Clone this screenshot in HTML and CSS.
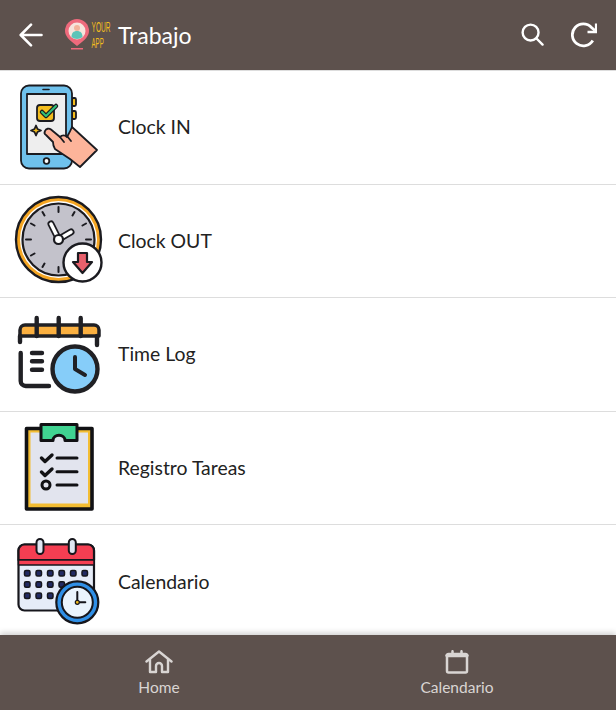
FILE: index.html
```html
<!DOCTYPE html>
<html lang="es">
<head>
    <meta charset="UTF-8">
    <meta name="viewport" content="width=device-width, initial-scale=1.0">
    <title>Trabajo</title>
    <link rel="stylesheet" href="styles.css">
</head>
<body>

    <!-- Barra superior -->
    <header class="topbar">
        <svg class="back" width="24" height="24" viewBox="0 0 24 24" fill="none" stroke="#fff" stroke-width="2.6" stroke-linecap="round" stroke-linejoin="round">
            <path d="M22.500 12H2M12 1.700L1.700 12 12 22.300"/>
        </svg>
        <svg class="logo" width="48" height="32" viewBox="0 0 48 32">
            <path d="M13 27C5 21 1 17 1 12a12 12 0 0 1 24 0c0 5-4 9-12 15z" fill="#ee6a7c"/>
            <circle cx="13" cy="12" r="8.500" fill="#f6e4dc"/>
            <path d="M7.500 18c0-4 2-6 5.500-6s5.500 2 5.500 6c-3 2.500-8 2.500-11 0z" fill="#5cc4b8"/>
            <circle cx="13" cy="9" r="3" fill="#f2b49c"/>
            <rect x="7" y="29" width="12" height="1.500" fill="#ee6a7c"/>
            <text class="logo-text" transform="translate(27.500 12.500) scale(.47 1)">YOUR</text>
            <text class="logo-text" transform="translate(27.500 29) scale(.44 1)">APP</text>
        </svg>
        <h1 class="title">Trabajo</h1>
        <div class="actions">
            <svg width="23" height="23" viewBox="0 0 24 24" fill="none" stroke="#fff" stroke-width="2.500" stroke-linecap="round">
                <circle cx="10" cy="10" r="8.300"/>
                <path d="M16.200 16.200L22.500 22.500"/>
            </svg>
            <svg width="26" height="26" viewBox="0 0 26 26" fill="none" stroke="#fff" stroke-width="2.800">
                <path d="M21.800 18.500A11 11 0 1 1 20.500 5.500L24 8.500"/>
                <path d="M25.200 1.500V10H16.500" stroke-width="2.600"/>
            </svg>
        </div>
    </header>

    <!-- Lista de opciones -->
    <main class="menu">
        <a class="item">
            <svg class="item-icon" viewBox="0 0 90 90" stroke="#1b1b20" stroke-width="1.800" stroke-linejoin="round" stroke-linecap="round">
                <rect x="58" y="16" width="4" height="8" rx="1.500" fill="#f3bd1e"/>
                <rect x="58" y="29" width="4" height="8" rx="1.500" fill="#f3bd1e"/>
                <rect x="7" y="3.500" width="51" height="83" rx="8" fill="#6fc1ec"/>
                <rect x="13" y="12" width="39" height="60" fill="#eeeeee"/>
                <path d="M29 7.500h6" stroke-width="1.600"/>
                <circle cx="32.500" cy="79" r="2.800" fill="#fff"/>
                <rect x="23" y="23" width="17" height="16" rx="3" fill="#f3bd1e"/>
                <path d="M28 30l4 4 10-10" fill="none" stroke-width="4.500"/>
                <path d="M28 30l4 4 10-10" fill="none" stroke="#2fc27a" stroke-width="2"/>
                <path d="M22 43.500l1.500 3.500 3.500 1.500-3.500 1.500-1.500 3.500-1.500-3.500-3.500-1.500 3.500-1.500z" fill="#f3bd1e"/>
                <path d="M31 49c1-2.500 4-3 6-1.500l9 7.500c2-2 5-2 7 0 1-2 3-5 5-10l25 23-17 17-10-8-15-10c-2-3-2-5-2-7l-7-7c-2-1-2-2-1-4z" fill="#fdb49a"/>
                <path d="M46 55l4 5M53 54l4 5" fill="none"/>
            </svg>
            <span>Clock IN</span>
        </a>
        <a class="item">
            <svg class="item-icon" viewBox="0 0 90 90" stroke="#1b1b20" stroke-linecap="round" stroke-linejoin="round">
                <circle cx="44.500" cy="44.500" r="42.500" fill="#f5a623" stroke-width="2.400"/>
                <circle cx="44.500" cy="44.500" r="38.500" fill="#fff" stroke="none"/>
                <circle cx="44.500" cy="44.500" r="36" fill="#c3c2cb" stroke-width="2.200"/>
                <path d="M44.500 12v5M44.500 72v5M12 44.500h5M72 44.500h5M28.500 17l2 3.500M60.500 17l-2 3.500M17 28.500l3.500 2M72 28.500l-3.500 2M17 60.500l3.500-2M28.500 72l2-3.500" fill="none" stroke-width="2"/>
                <path d="M37 29l7.500 15" fill="none" stroke-width="7"/>
                <path d="M37 29l7.500 15" fill="none" stroke="#fff" stroke-width="3.500"/>
                <path d="M57 37l-12 7" fill="none" stroke-width="7"/>
                <path d="M57 37l-12 7" fill="none" stroke="#fff" stroke-width="3.500"/>
                <circle cx="44.500" cy="44.500" r="4.500" fill="#fff" stroke-width="2.200"/>
                <circle cx="68.500" cy="67.500" r="19" fill="#fff" stroke-width="2.400"/>
                <path d="M64 58h9v9h5l-9.500 11L59 67h5z" fill="#e8606c" stroke-width="2.200"/>
            </svg>
            <span>Clock OUT</span>
        </a>
        <a class="item">
            <svg class="item-icon" viewBox="0 0 90 90" fill="none" stroke="#202024" stroke-width="4.400" stroke-linecap="round" stroke-linejoin="round">
                <path d="M6 27V21a5 5 0 0 1 5-5h69a5 5 0 0 1 5 5v6z" fill="#fbb040" stroke-width="3.500"/>
                <path d="M22.700 9v18M44.700 9v18M66.700 9v18"/>
                <path d="M6 27v6M83 27v9"/>
                <path d="M6.700 44v28a5 5 0 0 0 5 5H35"/>
                <path d="M18 44h10M18 52.300h10M18 60.700h10"/>
                <circle cx="61" cy="60" r="22.500" fill="#86cdf9"/>
                <path d="M61 48v12l10 6" stroke-width="4"/>
            </svg>
            <span>Time Log</span>
        </a>
        <a class="item">
            <svg class="item-icon" viewBox="0 0 90 90" stroke="#111114" stroke-linecap="round" stroke-linejoin="round">
                <rect x="12.500" y="6.500" width="65.500" height="80.500" fill="#f3bd33" stroke-width="3.600"/>
                <rect x="16.500" y="10.500" width="57.500" height="71" fill="#e2e4ee" stroke="none"/>
                <path d="M27 2.500h36v16H51c0-7-12-7-12 0H27z" fill="#40d391" stroke-width="3"/>
                <path d="M27.500 36l3.500 3.500 7-6.500M27.500 50l3.500 3.500 7-6.500" fill="none" stroke-width="3.400"/>
                <circle cx="32" cy="63" r="4" fill="#e2e4ee" stroke-width="3"/>
                <path d="M43 36h20M43 49.700h20M43 63h20" fill="none" stroke-width="3"/>
            </svg>
            <span>Registro Tareas</span>
        </a>
        <a class="item last">
            <svg class="item-icon" viewBox="0 0 90 90" stroke="#16161c" stroke-linecap="round" stroke-linejoin="round">
                <rect x="4.500" y="8.500" width="75.500" height="66" rx="6" fill="#e6ecf8" stroke-width="2.200"/>
                <path d="M4.500 24v-9.500a6 6 0 0 1 6-6H74a6 6 0 0 1 6 6V24z" fill="#f53e52" stroke-width="2.200"/>
                <rect x="4.500" y="24" width="75.500" height="5" fill="#f53e52" stroke-width="1.500"/>
                <rect x="22.500" y="3" width="7" height="15" rx="3.500" fill="#dfe6f2" stroke-width="2"/>
                <rect x="54.800" y="3" width="7" height="15" rx="3.500" fill="#dfe6f2" stroke-width="2"/>
                <g fill="#222a63" stroke-width="1.500">
                    <rect x="10.500" y="34.500" width="5.500" height="5.500" rx="1.500"/>
                    <rect x="22" y="34.500" width="5.500" height="5.500" rx="1.500"/>
                    <rect x="33.500" y="34.500" width="5.500" height="5.500" rx="1.500"/>
                    <rect x="45" y="34.500" width="5.500" height="5.500" rx="1.500"/>
                    <rect x="56.500" y="34.500" width="5.500" height="5.500" rx="1.500"/>
                    <rect x="68" y="34.500" width="5.500" height="5.500" rx="1.500"/>
                    <rect x="10.500" y="45.800" width="5.500" height="5.500" rx="1.500"/>
                    <rect x="22" y="45.800" width="5.500" height="5.500" rx="1.500"/>
                    <rect x="33.500" y="45.800" width="5.500" height="5.500" rx="1.500"/>
                    <rect x="45" y="45.800" width="5.500" height="5.500" rx="1.500"/>
                    <rect x="10.500" y="57" width="5.500" height="5.500" rx="1.500"/>
                    <rect x="22" y="57" width="5.500" height="5.500" rx="1.500"/>
                    <rect x="33.500" y="57" width="5.500" height="5.500" rx="1.500"/>
                </g>
                <circle cx="63.300" cy="66.300" r="21" fill="#2f8fe6" stroke-width="2.200"/>
                <circle cx="63.300" cy="66.300" r="15.500" fill="#eaf4fd" stroke-width="2"/>
                <path d="M63.300 56v10.300h8" fill="none" stroke-width="2"/>
                <circle cx="63.300" cy="66.300" r="2" fill="#f3bd1e" stroke-width="1.200"/>
            </svg>
            <span>Calendario</span>
        </a>
    </main>

    <!-- Navegacion inferior -->
    <nav class="tabs">
        <a class="tab">
            <svg width="28" height="24" viewBox="0 0 28 24" fill="none" stroke="#d9d5d3" stroke-width="2.400" stroke-linejoin="round" stroke-linecap="round">
                <path d="M1.500 11.500L14 1.500l12.500 10"/>
                <path d="M5 9.500V22h6v-6a3 3 0 0 1 6 0v6h6V9.500"/>
            </svg>
            <span>Home</span>
        </a>
        <a class="tab">
            <svg width="24" height="24" viewBox="0 0 24 24" fill="none" stroke="#d9d5d3" stroke-width="2.500" stroke-linejoin="round" stroke-linecap="round">
                <rect x="2" y="4" width="20" height="18.500" rx="1.500"/>
                <path d="M2 5.500h20" stroke-width="3.400"/>
                <path d="M7.500 1.200v3M16.500 1.200v3"/>
            </svg>
            <span>Calendario</span>
        </a>
    </nav>

</body>
</html>
```

FILE: styles.css
```css
/* Estilos generales */
* {
    box-sizing: border-box;
}

body {
    font-family: 'Lato', 'Liberation Sans', sans-serif;
    background-color: #fff;
    color: #222;
    margin: 0;
    height: 100vh;
    display: flex;
    flex-direction: column;
    overflow: hidden;
}

/* Barra superior */
.topbar {
    height: 71px;
    flex: none;
    display: flex;
    align-items: center;
    padding: 0 19px 1px 19px;
    background: #5d514d;
    border-bottom: 1px solid #ddd;
}

.logo {
    margin-left: 21px;
    flex: none;
}

.logo-text {
    font-family: 'Liberation Sans', sans-serif;
    font-size: 14px;
    fill: #f3bd1e;
}

.title {
    margin: 0 0 0 6px;
    font-size: 23px;
    font-weight: 400;
    color: #fff;
}

.actions {
    margin-left: auto;
    display: flex;
    align-items: center;
    gap: 27px;
}

/* Lista de opciones */
.menu {
    flex: 1;
    overflow: hidden;
}

.item {
    height: 113.5px;
    display: flex;
    align-items: center;
    gap: 14px;
    padding-left: 14px;
    padding-bottom: 1px;
    border-bottom: 1px solid #ddd;
    font-size: 19.4px;
}

.item.last {
    border-bottom: none;
}

.item-icon {
    width: 90px;
    height: 90px;
    flex: none;
}

/* Navegacion inferior */
.tabs {
    height: 75px;
    flex: none;
    display: grid;
    grid-template-columns: 1fr 1fr;
    padding: 0 10px;
    background: #5d514d;
    box-shadow: 0 -2px 6px rgba(0, 0, 0, 0.2);
}

.tab {
    display: flex;
    flex-direction: column;
    align-items: center;
    justify-content: center;
    gap: 4px;
    color: #d9d5d3;
    font-size: 15.5px;
}
```
